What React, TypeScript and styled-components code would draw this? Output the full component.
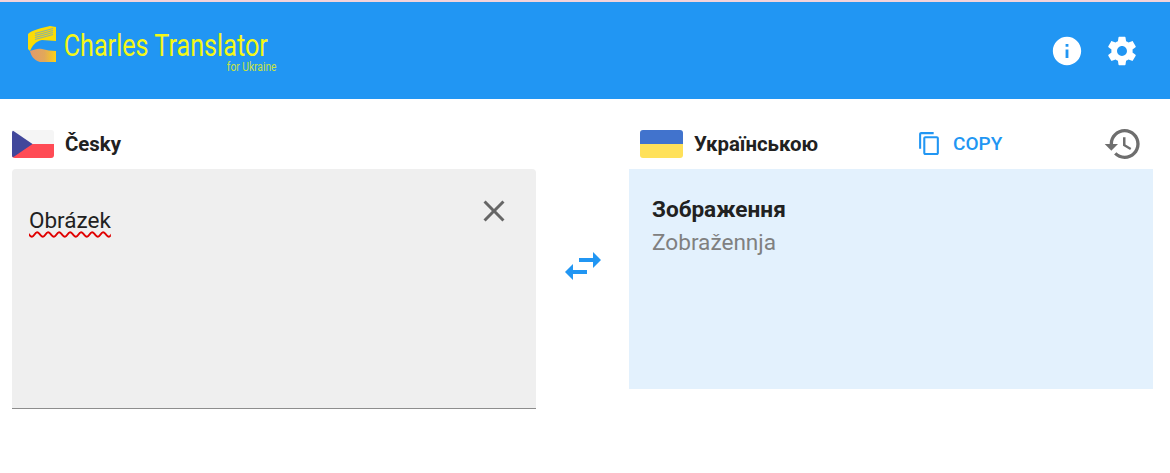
import React from 'react';
import styled, { createGlobalStyle } from 'styled-components';

const GlobalStyle = createGlobalStyle`
  html, body {
    margin: 0;
    padding: 0;
    background: #fff;
    font-family: Roboto, "Liberation Sans", sans-serif;
  }
`;

const Page = styled.div`
  width: 1170px;
  height: 473px;
  overflow: hidden;
  background: #fff;
  border-top: 2px solid #f3d3da;
  box-sizing: border-box;
`;

const Header = styled.header`
  height: 97px;
  background: #2196f3;
  display: flex;
  align-items: center;
  justify-content: space-between;
  padding: 0 31px 0 28px;
`;

const Brand = styled.div`
  display: flex;
  align-items: flex-start;
  gap: 8px;
  margin-top: -4px;
`;

/* the wordmark is a narrow face, so squeeze Roboto to the same width */
const BrandText = styled.div`
  display: flex;
  flex-direction: column;
  align-items: flex-end;
  padding-top: 3px;
  transform: scaleX(0.787);
  transform-origin: left center;
  width: 259px;
`;

const BrandName = styled.span`
  font-size: 32px;
  line-height: 32px;
  color: #f4f716;
  white-space: nowrap;
`;

const BrandSub = styled.span`
  font-size: 13px;
  line-height: 11px;
  color: #c9e33f;
  margin-right: -11px;
  white-space: nowrap;
`;

const HeaderActions = styled.div`
  display: flex;
  gap: 21px;
`;

const Icon = styled.svg<{ $size: number; $color: string }>`
  display: block;
  flex: none;
  width: ${({ $size }) => $size}px;
  height: ${({ $size }) => $size}px;
  fill: ${({ $color }) => $color};
`;

const Main = styled.main`
  display: grid;
  grid-template-columns: 524px 93px 524px;
  padding: 26px 0 0 12px;
`;

const Column = styled.section`
  display: flex;
  flex-direction: column;
`;

const LangRow = styled.div<{ $inset: number }>`
  height: 44px;
  display: flex;
  align-items: center;
  padding: 0 0 7px ${({ $inset }) => $inset}px;
  box-sizing: border-box;
`;

const FlagSvg = styled.svg<{ $width: number }>`
  display: block;
  flex: none;
  width: ${({ $width }) => $width}px;
  height: 28px;
  margin-right: 11px;
`;

const LangName = styled.span`
  font-size: 20.4px;
  font-weight: 700;
  color: #212121;
`;

const CopyButton = styled.button`
  display: flex;
  align-items: center;
  gap: 11px;
  margin: 0 0 0 99px;
  padding: 0;
  border: none;
  background: none;
  color: #2196f3;
  font-family: inherit;
  font-size: 19px;
  font-weight: 500;
`;

const HistoryButton = styled.button`
  margin: 0 10px 0 auto;
  padding: 0;
  border: none;
  background: none;
`;

const InputBox = styled.div`
  height: 240px;
  box-sizing: border-box;
  background: #efefef;
  border-radius: 4px 4px 0 0;
  border-bottom: 1px solid #8d8d8d;
  display: flex;
  justify-content: space-between;
  align-items: flex-start;
  padding: 24px 24px 0 17px;
`;

const InputText = styled.span`
  font-size: 22.5px;
  line-height: 54px;
  color: #212121;
  text-decoration: underline wavy #e00000 1.5px;
  text-underline-offset: 3px;
`;

const ClearButton = styled.button`
  padding: 0;
  border: none;
  background: none;
`;

const SwapCell = styled.div`
  display: flex;
  justify-content: center;
  padding-top: 117px;
`;

const OutputBox = styled.div`
  height: 220px;
  box-sizing: border-box;
  background: #e3f1fd;
  padding: 27px 23px;
`;

const Translation = styled.div`
  font-size: 22.6px;
  font-weight: 700;
  line-height: 28px;
  color: #212121;
`;

const Transliteration = styled.div`
  font-size: 22.6px;
  line-height: 28px;
  margin-top: 5px;
  color: #808080;
`;

const paths = {
  info: 'M12 2C6.48 2 2 6.48 2 12s4.48 10 10 10 10-4.48 10-10S17.52 2 12 2zm1 15h-2v-6h2v6zm0-8h-2V7h2v2z',
  settings:
    'M19.43 12.98c.04-.32.07-.64.07-.98s-.03-.66-.07-.98l2.11-1.65c.19-.15.24-.42.12-.64l-2-3.46c-.12-.22-.39-.3-.61-.22l-2.49 1c-.52-.4-1.08-.73-1.69-.98l-.38-2.65C14.46 2.18 14.25 2 14 2h-4c-.25 0-.46.18-.49.42l-.38 2.65c-.61.25-1.17.59-1.69.98l-2.49-1c-.23-.09-.49 0-.61.22l-2 3.46c-.13.22-.07.49.12.64l2.11 1.65c-.04.32-.07.65-.07.98s.03.66.07.98l-2.11 1.65c-.19.15-.24.42-.12.64l2 3.46c.12.22.39.3.61.22l2.49-1c.52.4 1.08.73 1.69.98l.38 2.65c.03.24.24.42.49.42h4c.25 0 .46-.18.49-.42l.38-2.65c.61-.25 1.17-.59 1.69-.98l2.49 1c.23.09.49 0 .61-.22l2-3.46c.12-.22.07-.49-.12-.64l-2.11-1.65zM12 15.5c-1.93 0-3.5-1.57-3.5-3.5s1.57-3.5 3.5-3.5 3.5 1.57 3.5 3.5-1.57 3.5-3.5 3.5z',
  copy: 'M16 1H4c-1.1 0-2 .9-2 2v14h2V3h12V1zm3 4H8c-1.1 0-2 .9-2 2v14c0 1.1.9 2 2 2h11c1.1 0 2-.9 2-2V7c0-1.1-.9-2-2-2zm0 16H8V7h11v14z',
  history:
    'M13 3c-4.97 0-9 4.03-9 9H1l3.89 3.89.07.14L9 12H6c0-3.87 3.13-7 7-7s7 3.13 7 7-3.13 7-7 7c-1.93 0-3.68-.79-4.94-2.06l-1.42 1.42C8.27 19.99 10.51 21 13 21c4.97 0 9-4.03 9-9s-4.03-9-9-9zm-1 5v5l4.28 2.54.72-1.21-3.5-2.08V8H12z',
  close: 'M19 6.41L17.59 5 12 10.59 6.41 5 5 6.41 10.59 12 5 17.59 6.41 19 12 13.41 17.59 19 19 17.59 13.41 12z',
  swap: 'M6.99 11L3 15l3.99 4v-3H14v-2H6.99v-3zM21 9l-3.99-4v3H10v2h7.01v3L21 9z',
};

const MaterialIcon: React.FC<{ name: keyof typeof paths; size: number; color: string }> = ({ name, size, color }) => (
  <Icon viewBox="0 0 24 24" $size={size} $color={color}>
    <path d={paths[name]} />
  </Icon>
);

const Logo: React.FC = () => (
  <svg width="28" height="37" viewBox="0 0 28 37" style={{ display: 'block', flex: 'none' }}>
    <defs>
      <linearGradient id="logoLow" x1="0" x2="1" y1="0" y2="0">
        <stop offset="0" stopColor="#e39a6c" />
        <stop offset="0.55" stopColor="#e2a85a" />
        <stop offset="1" stopColor="#fcd116" />
      </linearGradient>
    </defs>
    <path d="M0 8 C4 4 14 2 22 0 L28 1 L28 15 L14 14 C8 15 4 20 2 25 L0 23 Z" fill="#fbdc06" />
    <path
      d="M7 7.5 L25 2.5 M7 9.5 L25 4.5 M7 11.5 L25 6.5 M7 13.5 L25 8.5"
      stroke="#8fb0a0"
      strokeWidth="1.1"
      fill="none"
    />
    <path d="M2 25 C6 24 10 22 14 23 C18 24 24 25 28 25 L28 36 L12 36 C6 34 3 30 2 25 Z" fill="url(#logoLow)" />
  </svg>
);

const CzechFlag: React.FC = () => (
  <FlagSvg viewBox="0 0 43 28" preserveAspectRatio="none" $width={42}>
    <clipPath id="czClip">
      <rect width="43" height="28" rx="3" />
    </clipPath>
    <g clipPath="url(#czClip)">
      <rect width="43" height="14" fill="#f5f5f5" />
      <rect y="14" width="43" height="14" fill="#ff4b55" />
      <path d="M0 0 L21 14 L0 28 Z" fill="#41479b" />
    </g>
  </FlagSvg>
);

const UkraineFlag: React.FC = () => (
  <FlagSvg viewBox="0 0 43 28" $width={43}>
    <clipPath id="uaClip">
      <rect width="43" height="28" rx="3" />
    </clipPath>
    <g clipPath="url(#uaClip)">
      <rect width="43" height="14" fill="#4173cd" />
      <rect y="14" width="43" height="14" fill="#ffe15a" />
    </g>
  </FlagSvg>
);

export default function App() {
  return (
    <Page>
      <GlobalStyle />
      <Header>
        <Brand>
          <Logo />
          <BrandText>
            <BrandName>Charles Translator</BrandName>
            <BrandSub>for Ukraine</BrandSub>
          </BrandText>
        </Brand>
        <HeaderActions>
          <MaterialIcon name="info" size={34} color="#fff" />
          <MaterialIcon name="settings" size={34} color="#fff" />
        </HeaderActions>
      </Header>
      <Main>
        <Column>
          <LangRow $inset={0}>
            <CzechFlag />
            <LangName>Česky</LangName>
          </LangRow>
          <InputBox>
            <InputText>Obrázek</InputText>
            <ClearButton>
              <MaterialIcon name="close" size={36} color="#666" />
            </ClearButton>
          </InputBox>
        </Column>
        <SwapCell>
          <MaterialIcon name="swap" size={48} color="#2196f3" />
        </SwapCell>
        <Column>
          <LangRow $inset={11}>
            <UkraineFlag />
            <LangName>Українською</LangName>
            <CopyButton>
              <MaterialIcon name="copy" size={25} color="#2196f3" />
              COPY
            </CopyButton>
            <HistoryButton>
              <MaterialIcon name="history" size={40} color="#6e6e6e" />
            </HistoryButton>
          </LangRow>
          <OutputBox>
            <Translation>Зображення</Translation>
            <Transliteration>Zobražennja</Transliteration>
          </OutputBox>
        </Column>
      </Main>
    </Page>
  );
}
